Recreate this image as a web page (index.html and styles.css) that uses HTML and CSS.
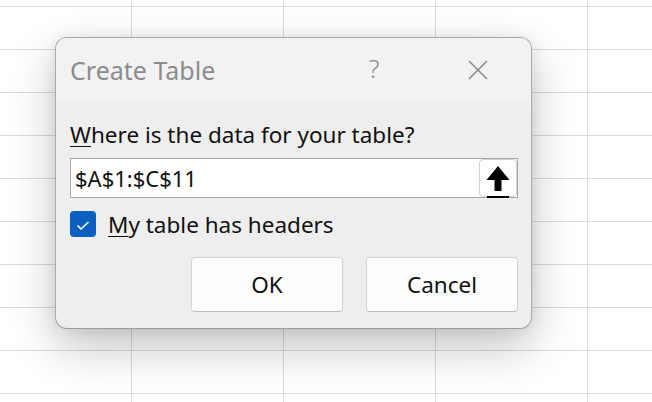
FILE: index.html
```html
<!DOCTYPE html>
<html lang="en">
  <head>
    <meta charset="UTF-8" />
    <meta name="viewport" content="width=device-width, initial-scale=1.0" />
    <title>Create Table</title>
    <link rel="stylesheet" href="styles.css">
  </head>
  <body>
    <div class="sheet">
      <div class="dialog">
        <div class="titleBar">
          <div class="title">Create Table</div>
          <button class="help">?</button>
          <button class="close">
            <svg width="22" height="22" viewBox="0 0 22 22">
              <path d="M2 2 L20 20 M20 2 L2 20" stroke="#8a8a8a" stroke-width="1.6" fill="none" />
            </svg>
          </button>
        </div>
        <div class="body">
          <div class="label"><u>W</u>here is the data for your table?</div>
          <div class="rangeBox">
            <div class="rangeText">$A$1:$C$11</div>
            <button class="collapse">
              <svg width="24" height="34" viewBox="0 0 24 34">
                <path d="M12 3 L23.5 17 L15.5 17 L15.5 28 L8.5 28 L8.5 17 L0.5 17 Z" fill="#000" />
                <rect x="1" y="33" width="22" height="2" fill="#000" />
              </svg>
            </button>
          </div>
          <label class="headers">
            <span class="check">
              <svg width="26" height="26" viewBox="0 0 26 26">
                <path d="M7.5 14.5 L11 18 L18.5 11" stroke="#fff" stroke-width="1.6" fill="none" />
              </svg>
            </span>
            <span><u>M</u>y table has headers</span>
          </label>
          <div class="actions">
            <button class="btn">OK</button>
            <button class="btn">Cancel</button>
          </div>
        </div>
      </div>
    </div>
  </body>
</html>
```

FILE: styles.css
```css
html {
  height: 100%;
}
body {
  margin: 0;
  height: 100%;
  font-family: "Noto Sans", "Open Sans", sans-serif;
}
.sheet {
  position: relative;
  height: 402px;
  background-color: #fff;
  background-image:
    linear-gradient(to right, #dadada 1px, transparent 1px),
    linear-gradient(to bottom, #dadada 1px, transparent 1px);
  background-size: 152px 43px;
  background-position: 131px 6px;
  overflow: hidden;
}
.dialog {
  position: absolute;
  top: 37px;
  left: 55px;
  width: 475px;
  height: 290px;
  border: 1px solid #a9a9a9;
  border-bottom-color: #9c9c9c;
  border-radius: 12px;
  background-color: #eeeeee;
  box-shadow: 0 18px 46px rgba(0, 0, 0, 0.24), 0 0 14px rgba(0, 0, 0, 0.08);
  overflow: hidden;
  display: flex;
  flex-direction: column;
}
.titleBar {
  height: 64px;
  flex-shrink: 0;
  display: flex;
  align-items: center;
  padding-left: 14px;
  background-color: #f2f2f2;
}
.title {
  font-size: 25px;
  color: #8c8c8c;
  flex: 1;
}
.help,
.close {
  border: 0;
  background: none;
  padding: 0;
  width: 48px;
  height: 40px;
  display: flex;
  align-items: center;
  justify-content: center;
}
.help {
  font-family: "Noto Sans", sans-serif;
  font-size: 25px;
  color: #8c8c8c;
  font-weight: 300;
  margin-top: -4px;
}
.close {
  margin-left: 56px;
  margin-right: 29px;
}
.body {
  padding: 19px 13px 0 14px;
  display: flex;
  flex-direction: column;
}
.label {
  font-size: 22.5px;
  line-height: 28px;
  color: #111;
}
u {
  text-decoration-thickness: 1px;
  text-underline-offset: 3px;
}
.rangeBox {
  margin-top: 9px;
  height: 38px;
  border: 1px solid #a6a6a6;
  background-color: #fff;
  display: flex;
  align-items: center;
}
.rangeText {
  flex: 1;
  padding-left: 4px;
  font-size: 22px;
  color: #111;
}
.collapse {
  width: 38px;
  height: 38px;
  border: 1px solid #d2d2d2;
  border-radius: 4px;
  background-color: #fff;
  padding: 0;
  display: flex;
  justify-content: center;
  align-items: flex-start;
}
.collapse svg {
  margin-top: 3px;
  overflow: visible;
}
.headers {
  margin-top: 13px;
  height: 26px;
  display: flex;
  align-items: center;
  gap: 12px;
  font-size: 22.5px;
  color: #111;
}
.check {
  width: 26px;
  height: 26px;
  border-radius: 4px;
  background-color: #0b5fbf;
  display: flex;
}
.actions {
  margin-top: 20px;
  display: flex;
  justify-content: flex-end;
  gap: 23px;
}
.btn {
  width: 152px;
  height: 55px;
  border: 1px solid #d3d3d3;
  border-bottom-color: #bdbdbd;
  border-radius: 4px;
  background-color: #fdfdfd;
  font-family: "Noto Sans", sans-serif;
  font-size: 22.5px;
  color: #111;
}
```
